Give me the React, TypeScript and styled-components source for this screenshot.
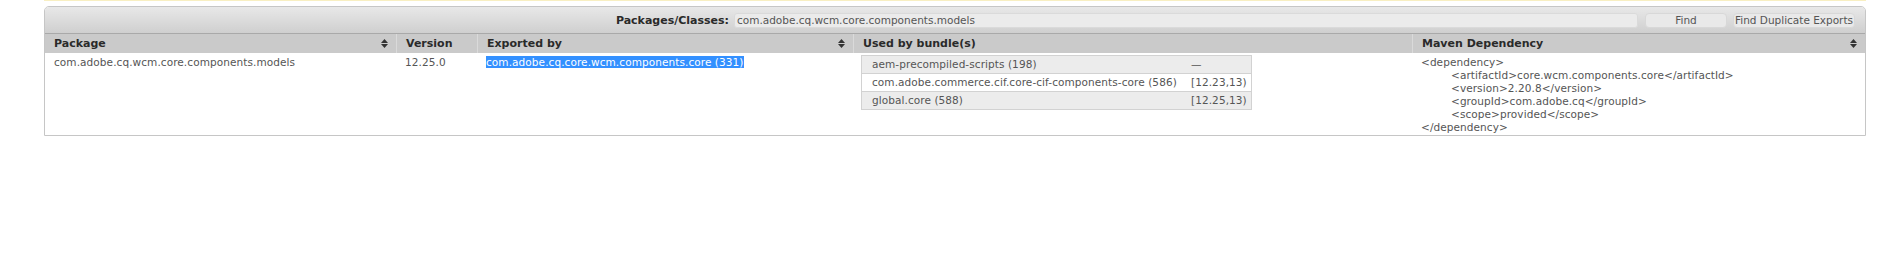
import styled, { createGlobalStyle } from "styled-components";

const GlobalStyle = createGlobalStyle`
    html, body {
        margin: 0;
        padding: 0;
        background: #fff;
    }
    body {
        font-family: "DejaVu Sans", Verdana, sans-serif;
        font-size: 10.5px;
        color: #555;
    }
`;

const Page = styled.div`
    margin: 0 13px 0 44px;
    height: 261px;
`;

const Notice = styled.div`
    height: 1px;
    background: #f8efc2;
`;

const Panel = styled.div`
    margin-top: 5px;
    border: 1px solid #c6c6c6;
    border-radius: 5px 5px 0 0;
    overflow: hidden;
`;

const Toolbar = styled.div`
    height: 26px;
    display: flex;
    align-items: center;
    justify-content: flex-end;
    padding-right: 10px;
    background: linear-gradient(#e8e8e8, #cfcfcf);
    border-bottom: 1px solid #a9a9a9;
`;

const Label = styled.label`
    font-weight: bold;
    font-size: 11px;
    color: #2a2a2a;
    margin-right: 5px;
`;

const SearchInput = styled.input`
    box-sizing: border-box;
    width: 904px;
    height: 15px;
    padding: 0 2px;
    border: 1px solid #dadada;
    border-radius: 3px;
    background: #ebebeb;
    font-family: inherit;
    font-size: 10.5px;
    color: #555;
    outline: none;
`;

const Button = styled.button<{ $w: number; $gap: number }>`
    box-sizing: border-box;
    width: ${p => p.$w}px;
    height: 15px;
    margin-left: ${p => p.$gap}px;
    padding: 0;
    border: 1px solid #d8d8d8;
    border-radius: 4px;
    background: #e9e9e9;
    font-family: inherit;
    font-size: 10.5px;
    color: #555;
    white-space: nowrap;
`;

const COLS = "351px 81px 376px 559px 1fr";

const HeadRow = styled.div`
    display: grid;
    grid-template-columns: ${COLS};
    height: 19px;
    background: #cacaca;
`;

const HeadCell = styled.div<{ $first?: boolean }>`
    display: flex;
    align-items: center;
    justify-content: space-between;
    padding: 0 8px 0 9px;
    border-left: ${p => (p.$first ? "none" : "1px solid #dadada")};
    font-weight: bold;
    font-size: 11px;
    color: #2a2a2a;
`;

const BodyRow = styled.div`
    display: grid;
    grid-template-columns: ${COLS};
    background: #fff;
    padding-bottom: 2px;
    letter-spacing: 0.08px;
`;

const Cell = styled.div`
    padding: 3px 9px 0 9px;
    line-height: 13px;
    white-space: nowrap;
`;

const Selected = styled.span`
    background: #3390ff;
    color: #fff;
`;

const BundleTable = styled.table`
    margin: -1px 0 0 -1px;
    width: 391px;
    border-collapse: collapse;
    border: 1px solid #d2d2d2;
    line-height: 13px;
`;

const BundleRow = styled.tr<{ $odd: boolean }>`
    height: 18px;
    background: ${p => (p.$odd ? "#ececec" : "#fff")};
    border-top: 1px solid #d2d2d2;
`;

const BundleName = styled.td`
    width: 315px;
    padding: 0 0 0 10px;
    color: #555;
`;

const BundleRange = styled.td`
    padding: 0 0 0 4px;
    color: #555;
`;

const DepLine = styled.div<{ $indent?: boolean }>`
    padding-left: ${p => (p.$indent ? 30 : 0)}px;
    line-height: 12.9px;
`;

function SortIcon() {
    return (
        <svg width="7" height="9" viewBox="0 0 7 9">
            <polygon points="3.5,0 7,4 0,4" fill="#333" />
            <polygon points="0,5 7,5 3.5,9" fill="#333" />
        </svg>
    );
}

const bundles = [
    { name: "aem-precompiled-scripts (198)", range: "—" },
    { name: "com.adobe.commerce.cif.core-cif-components-core (586)", range: "[12.23,13)" },
    { name: "global.core (588)", range: "[12.25,13)" },
];

const dependency = [
    { text: "<dependency>", indent: false },
    { text: "<artifactId>core.wcm.components.core</artifactId>", indent: true },
    { text: "<version>2.20.8</version>", indent: true },
    { text: "<groupId>com.adobe.cq</groupId>", indent: true },
    { text: "<scope>provided</scope>", indent: true },
    { text: "</dependency>", indent: false },
];

function App() {
    return (
        <Page>
            <GlobalStyle />
            <Notice />
            <Panel>
                <Toolbar>
                    <Label>Packages/Classes:</Label>
                    <SearchInput defaultValue="com.adobe.cq.wcm.core.components.models" />
                    <Button $w={82} $gap={7}>Find</Button>
                    <Button $w={122} $gap={6}>Find Duplicate Exports</Button>
                </Toolbar>
                <HeadRow>
                    <HeadCell $first>Package <SortIcon /></HeadCell>
                    <HeadCell>Version</HeadCell>
                    <HeadCell>Exported by <SortIcon /></HeadCell>
                    <HeadCell>Used by bundle(s)</HeadCell>
                    <HeadCell>Maven Dependency <SortIcon /></HeadCell>
                </HeadRow>
                <BodyRow>
                    <Cell>com.adobe.cq.wcm.core.components.models</Cell>
                    <Cell>12.25.0</Cell>
                    <Cell>
                        <Selected>com.adobe.cq.core.wcm.components.core (331)</Selected>
                    </Cell>
                    <Cell>
                        <BundleTable>
                            <tbody>
                                {bundles.map((b, i) => (
                                    <BundleRow key={b.name} $odd={i % 2 === 0}>
                                        <BundleName>{b.name}</BundleName>
                                        <BundleRange>{b.range}</BundleRange>
                                    </BundleRow>
                                ))}
                            </tbody>
                        </BundleTable>
                    </Cell>
                    <Cell>
                        {dependency.map((d, i) => (
                            <DepLine key={i} $indent={d.indent}>{d.text}</DepLine>
                        ))}
                    </Cell>
                </BodyRow>
            </Panel>
        </Page>
    );
}

export default App;
